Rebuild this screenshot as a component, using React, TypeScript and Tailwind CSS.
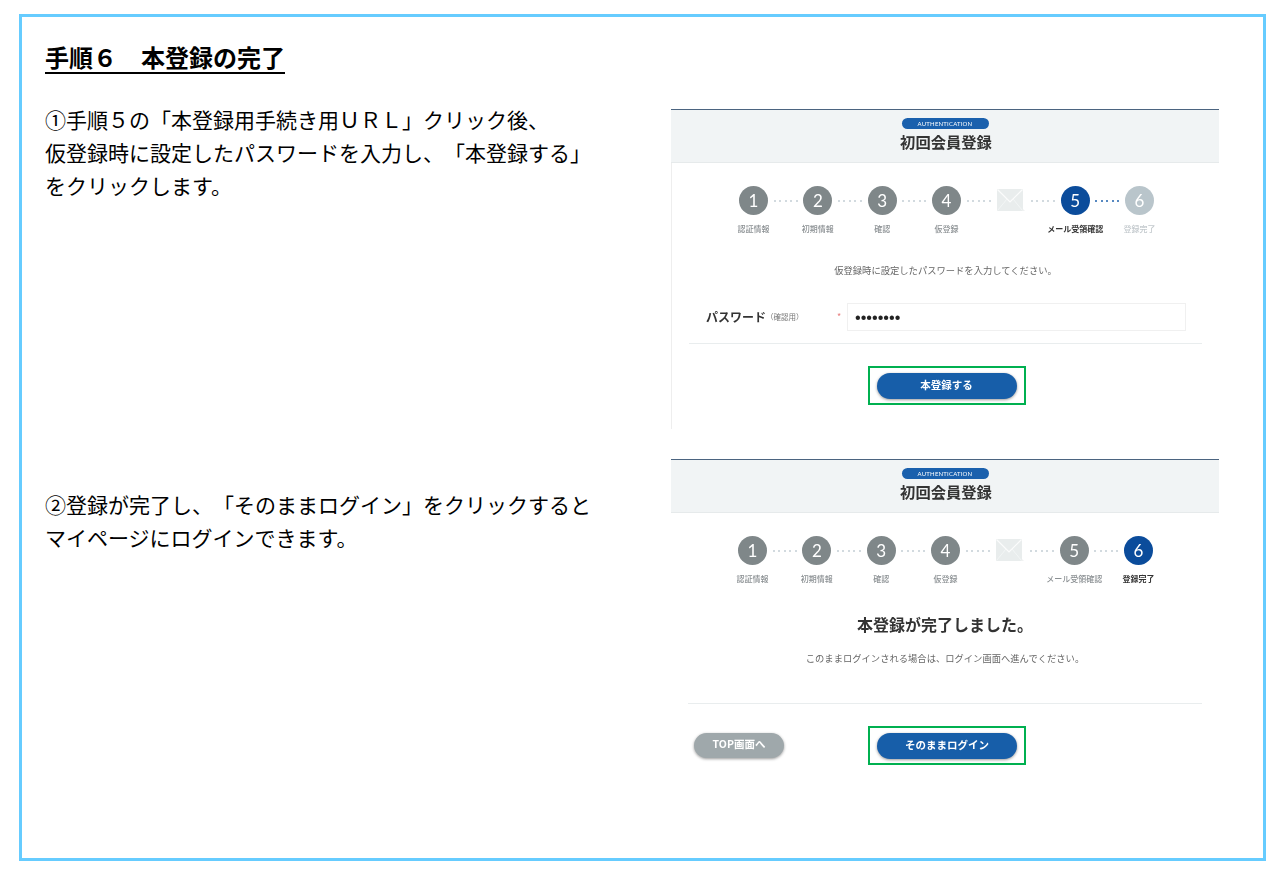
const dots = [0, 1, 2, 3, 4];

function Dots({ active }: { active?: boolean }) {
  return (
    <div className="flex h-[29px] w-[35.33px] items-center justify-center gap-[3.5px]">
      {dots.map((d) => (
        <span key={d} className={active ? 'size-[2px] rounded-full bg-[#1f62ad]' : 'size-[2px] rounded-full bg-[#c3ced4]'} />
      ))}
    </div>
  );
}

function Step({ n, label, state }: { n: number; label: string; state: 'done' | 'active' | 'todo' }) {
  const circle = state === 'active' ? 'bg-[#0b4c9b]' : state === 'todo' ? 'bg-[#b9c5cb]' : 'bg-[#7f8789]';
  const text = state === 'active' ? 'font-bold text-[#333333]' : state === 'todo' ? 'font-medium text-[#c3c9cd]' : 'font-medium text-[#8b9093]';
  return (
    <div className="flex w-[29px] flex-col items-center">
      <div className={`flex size-[29px] items-center justify-center rounded-full font-['Lato',sans-serif] text-[17px] text-white ${circle}`}>
        {n}
      </div>
      <div className={`mt-[9px] whitespace-nowrap text-[8px] leading-[10px] ${text}`}>{label}</div>
    </div>
  );
}

function Mail() {
  return (
    <div className="flex h-[29px] w-[29px] items-center justify-end">
      <svg width="28" height="23" viewBox="0 0 28 23">
        <rect x="0" y="0" width="26" height="22" fill="#e9eded" />
        <path d="M0.5 0.5 L13 13 L25.5 0.5" fill="none" stroke="#fbfcfc" strokeWidth="1.2" />
        <path d="M0.5 21.5 L10 10 M25.5 21.5 L16 10" fill="none" stroke="#f5f7f7" strokeWidth="0.8" />
        <path d="M26 20 L28 22 L26 22 Z" fill="#f0f2f2" />
      </svg>
    </div>
  );
}

function Stepper({ current }: { current: 5 | 6 }) {
  return (
    <div className="flex">
      <Step n={1} label="認証情報" state="done" />
      <Dots />
      <Step n={2} label="初期情報" state="done" />
      <Dots />
      <Step n={3} label="確認" state="done" />
      <Dots />
      <Step n={4} label="仮登録" state="done" />
      <Dots />
      <Mail />
      <Dots />
      <Step n={5} label="メール受領確認" state={current === 5 ? 'active' : 'done'} />
      <Dots active={current === 5} />
      <Step n={6} label="登録完了" state={current === 6 ? 'active' : 'todo'} />
    </div>
  );
}

function PageHead() {
  return (
    <div className="flex h-[54px] flex-col items-center border-t border-b border-t-[#4b6480] border-b-[#e6eaeb] bg-[#f1f4f5]">
      <div className="mt-[8px] flex h-[11px] w-[87px] items-center justify-center rounded-full bg-[#1a60ad] font-['Lato',sans-serif] text-[6px] tracking-[0.2px] text-white">
        AUTHENTICATION
      </div>
      <div className="mt-[1px] pl-[2px] text-[15.3px] font-bold leading-[22px] text-[#333333]">初回会員登録</div>
    </div>
  );
}

function PrimaryButton({ label }: { label: string }) {
  return (
    <div className="border-2 border-[#00b050] px-[7px] pb-[4px] pt-[5px]">
      <div className="flex h-[26px] w-[140px] items-center justify-center rounded-full bg-[#175ea9] pb-[3px] text-[10.5px] font-bold text-white shadow-[0_1px_3px_rgba(0,0,0,0.4)]">
        {label}
      </div>
    </div>
  );
}

function PasswordScreen() {
  return (
    <div className="w-[548px] blur-[0.35px]">
      <PageHead />
      <div className="h-[266px] border-l border-[#eeeeee] pt-[23px]">
        <div className="pl-[67px]">
          <Stepper current={5} />
        </div>
        <p className="mt-[29px] text-center text-[9.3px] leading-[14px] text-[#666666]">
          仮登録時に設定したパスワードを入力してください。
        </p>
        <div className="mx-[17px] mt-[26px] flex h-[41px] items-start border-b border-[#e9edee] pl-[17px]">
          <div className="flex h-[28px] w-[131px] items-center">
            <span className="text-[12px] font-bold text-[#333333]">パスワード</span>
            <span className="text-[7.5px] text-[#777777]">（確認用）</span>
          </div>
          <span className="flex h-[28px] w-[10px] items-center text-[9px] text-[#e88080]">*</span>
          <div className="flex h-[28px] w-[339px] items-center border border-[#f0f0f0] pb-[3px] pl-[7px] text-[15px] font-bold leading-none text-[#222222]">
            ••••••••
          </div>
        </div>
        <div className="mt-[22px] flex justify-center pl-[2px]">
          <PrimaryButton label="本登録する" />
        </div>
      </div>
    </div>
  );
}

function CompleteScreen() {
  return (
    <div className="w-[548px] blur-[0.35px]">
      <PageHead />
      <div className="pl-[67px] pt-[23px]">
        <Stepper current={6} />
      </div>
      <h3 className="mt-[28px] text-center text-[16px] font-bold leading-[24px] text-[#333333]">本登録が完了しました。</h3>
      <p className="mt-[15px] text-center text-[9.3px] leading-[14px] text-[#666666]">
        このままログインされる場合は、ログイン画面へ進んでください。
      </p>
      <div className="mx-[17px] mt-[38px] border-b border-[#e9edee]" />
      <div className="mt-[22px] flex items-start pl-[23px]">
        <div className="mt-[7px] flex h-[25px] w-[90px] items-center justify-center rounded-full bg-[#9fa8ab] pb-[3px] text-[10.5px] font-bold text-white shadow-[0_1px_3px_rgba(0,0,0,0.4)]">
          TOP画面へ
        </div>
        <div className="ml-[84px]">
          <PrimaryButton label="そのままログイン" />
        </div>
      </div>
    </div>
  );
}

export default function App() {
  return (
    <div className="h-[875px] bg-white pl-[19px] pt-[14px] font-['Noto_Sans_CJK_JP',sans-serif] text-black">
      <div className="h-[847px] w-[1247px] border-[3px] border-[#66ccff] pl-[23px]">
        <h2 className="mt-[25px] w-fit border-b-2 border-black text-[24px] font-bold leading-[30px]">手順６　本登録の完了</h2>
        <div className="mt-[29px] flex h-[352px]">
          <p className="w-[626px] text-[21px] leading-[33px] [text-spacing-trim:space-all]">
            ①手順５の「本登録用手続き用ＵＲＬ」クリック後、
            <br />
            仮登録時に設定したパスワードを入力し、「本登録する」
            <br />
            をクリックします。
          </p>
          <div className="pt-[6px]">
            <PasswordScreen />
          </div>
        </div>
        <div className="flex">
          <p className="w-[626px] pt-[33px] text-[21px] leading-[33px] [text-spacing-trim:space-all]">
            ②登録が完了し、「そのままログイン」をクリックすると
            <br />
            マイページにログインできます。
          </p>
          <div className="pt-[4px]">
            <CompleteScreen />
          </div>
        </div>
      </div>
    </div>
  );
}
